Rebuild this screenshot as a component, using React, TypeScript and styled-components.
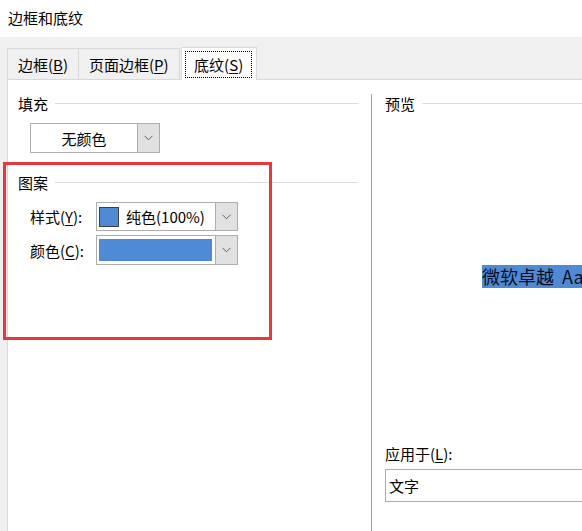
import styled, { createGlobalStyle } from 'styled-components';

const GlobalStyle = createGlobalStyle`
  html, body {
    margin: 0;
    padding: 0;
    background: #ffffff;
    overflow: hidden;
  }
  body {
    font-family: "Microsoft YaHei", "Noto Sans CJK SC", "Noto Sans", sans-serif;
    font-size: 15px;
    color: #000000;
  }
  u {
    text-underline-offset: 2px;
  }
`;

const Page = styled.div`
  position: relative;
  width: 582px;
  height: 531px;
  overflow: hidden;
`;

const TitleBar = styled.div`
  height: 37px;
  line-height: 36px;
  padding-left: 8px;
  font-size: 15px;
`;

const DialogBody = styled.div`
  height: 494px;
  background: #f0f0f0;
  padding: 10px 0 0 7px;
  box-sizing: border-box;
  display: flex;
  flex-direction: column;
`;

const TabStrip = styled.div`
  display: flex;
  align-items: flex-start;
  height: 32px;
`;

const Tab = styled.div<{ $active?: boolean }>`
  position: relative;
  box-sizing: border-box;
  display: flex;
  align-items: center;
  justify-content: center;
  width: ${p => p.$active ? '76px' : 'auto'};
  padding: 0 ${p => p.$active ? '0' : '10px'};
  height: ${p => p.$active ? '33px' : '31px'};
  margin-top: ${p => p.$active ? '0' : '1px'};
  margin-left: ${p => p.$active ? '1px' : '0'};
  border: 1px solid #d9d9d9;
  border-bottom: none;
  border-left: ${p => p.$active ? '1px solid #d9d9d9' : 'none'};
  background: ${p => p.$active ? '#ffffff' : '#f0f0f0'};
  z-index: ${p => p.$active ? 1 : 0};
  &:first-child {
    border-left: 1px solid #d9d9d9;
  }
`;

const FocusRing = styled.span`
  display: flex;
  align-items: center;
  justify-content: center;
  width: 67px;
  height: 27px;
  border: 1px dotted #000000;
  box-sizing: border-box;
  margin-top: 1px;
`;

const Panel = styled.div`
  flex: 1;
  display: flex;
  background: #ffffff;
  border-top: 1px solid #d9d9d9;
  border-left: 1px solid #d9d9d9;
`;

const LeftColumn = styled.div`
  width: 363px;
  flex-shrink: 0;
  padding: 13px 13px 0 10px;
  box-sizing: border-box;
  display: flex;
  flex-direction: column;
`;

const Divider = styled.div`
  width: 1px;
  flex-shrink: 0;
  margin-top: 14px;
  background: #a0a0a0;
`;

const RightColumn = styled.div`
  width: 420px;
  flex-shrink: 0;
  padding: 13px 0 0 13px;
  box-sizing: border-box;
  display: flex;
  flex-direction: column;
`;

const GroupHeader = styled.div<{ $gap?: number }>`
  display: flex;
  align-items: center;
  height: 20px;
  margin-top: ${p => p.$gap ?? 0}px;
  &::after {
    content: '';
    flex: 1;
    height: 1px;
    margin-left: 7px;
    background: #dcdcdc;
  }
`;

const Combo = styled.div<{ $width: number; $height: number; $gap: number; $indent?: number }>`
  display: flex;
  box-sizing: border-box;
  width: ${p => p.$width}px;
  height: ${p => p.$height}px;
  margin-top: ${p => p.$gap}px;
  margin-left: ${p => p.$indent ?? 0}px;
  border: 1px solid #adadad;
  background: #ffffff;
`;

const ComboValue = styled.div<{ $center?: boolean }>`
  flex: 1;
  display: flex;
  align-items: center;
  justify-content: ${p => p.$center ? 'center' : 'flex-start'};
  padding: ${p => p.$center ? '0' : '0 0 0 2px'};
  gap: 7px;
  min-width: 0;
`;

const ArrowButton = styled.div`
  width: 21px;
  display: flex;
  align-items: center;
  justify-content: center;
  background: #e1e1e1;
  border-left: 1px solid #adadad;
`;

const Swatch = styled.span`
  width: 20px;
  height: 20px;
  box-sizing: border-box;
  background: #4f8bd4;
  border: 1px solid #3f3f3f;
`;

const ColorBar = styled.span`
  flex: 1;
  align-self: stretch;
  margin: 3px 3px 3px 2px;
  background: #4f8bd4;
`;

const FieldRow = styled.div<{ $gap: number }>`
  display: flex;
  align-items: center;
  margin-top: ${p => p.$gap}px;
  padding-left: 12px;
`;

const FieldLabel = styled.span`
  width: 54px;
  padding-right: 12px;
`;

const PreviewArea = styled.div`
  height: 327px;
  display: flex;
  align-items: center;
  padding-left: 97px;
`;

const PreviewText = styled.span`
  background: #4f8bd4;
  font-size: 18px;
  line-height: 23px;
  white-space: nowrap;
  padding-right: 40px;
  color: #0b0b1e;
`;

const ApplyLabel = styled.div`
  height: 20px;
  line-height: 20px;
  margin-top: 4px;
`;

const ApplyInput = styled.div`
  height: 33px;
  margin-top: 5px;
  box-sizing: border-box;
  border: 1px solid #adadad;
  display: flex;
  align-items: center;
  padding-left: 3px;
`;

const Annotation = styled.div`
  position: absolute;
  left: 3px;
  top: 162px;
  width: 269px;
  height: 178px;
  box-sizing: border-box;
  border: 3px solid #e5393d;
  pointer-events: none;
`;

const Chevron = () => (
  <svg width="9" height="6" viewBox="0 0 9 6">
    <path d="M0.5 0.8 L4.5 4.8 L8.5 0.8" fill="none" stroke="#606060" strokeWidth="1" />
  </svg>
);

const App = () => {
  return (
    <>
      <GlobalStyle />
      <Page>
        <TitleBar>边框和底纹</TitleBar>
        <DialogBody>
          <TabStrip>
            <Tab>边框(<u>B</u>)</Tab>
            <Tab>页面边框(<u>P</u>)</Tab>
            <Tab $active>
              <FocusRing>底纹(<u>S</u>)</FocusRing>
            </Tab>
          </TabStrip>
          <Panel>
            <LeftColumn>
              <GroupHeader>填充</GroupHeader>
              <Combo $width={130} $height={30} $gap={10} $indent={12}>
                <ComboValue $center>无颜色</ComboValue>
                <ArrowButton><Chevron /></ArrowButton>
              </Combo>
              <GroupHeader $gap={19}>图案</GroupHeader>
              <FieldRow $gap={10}>
                <FieldLabel>样式(<u>Y</u>):</FieldLabel>
                <Combo $width={142} $height={29} $gap={0}>
                  <ComboValue>
                    <Swatch />
                    <span>纯色(100%)</span>
                  </ComboValue>
                  <ArrowButton><Chevron /></ArrowButton>
                </Combo>
              </FieldRow>
              <FieldRow $gap={4}>
                <FieldLabel>颜色(<u>C</u>):</FieldLabel>
                <Combo $width={142} $height={30} $gap={0}>
                  <ColorBar />
                  <ArrowButton><Chevron /></ArrowButton>
                </Combo>
              </FieldRow>
            </LeftColumn>
            <Divider />
            <RightColumn>
              <GroupHeader>预览</GroupHeader>
              <PreviewArea>
                <PreviewText>微软卓越&nbsp;&nbsp;AaBbCc</PreviewText>
              </PreviewArea>
              <ApplyLabel>应用于(<u>L</u>):</ApplyLabel>
              <ApplyInput>文字</ApplyInput>
            </RightColumn>
          </Panel>
        </DialogBody>
        <Annotation />
      </Page>
    </>
  );
};

export default App;
